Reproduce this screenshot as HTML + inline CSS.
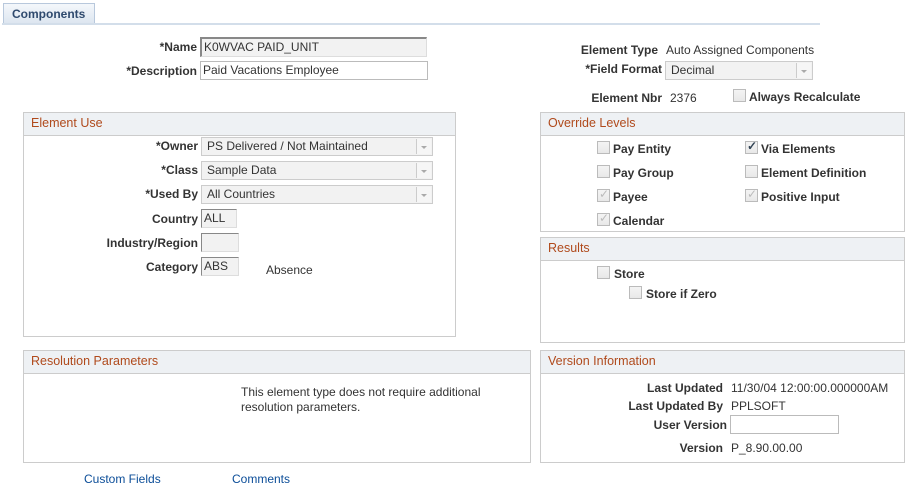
<!DOCTYPE html>
<html><head><meta charset="utf-8"><style>
body{margin:0;width:910px;height:487px;background:#fff;font-family:"Liberation Sans",Arial,sans-serif;font-size:12px;color:#333;position:relative;overflow:hidden}
.a{position:absolute;line-height:14px;white-space:nowrap}
.b{font-weight:bold}
.r{text-align:right}
.box{position:absolute;border:1px solid #ccc;box-sizing:border-box;background:#fff}
.hd{height:22px;background:#eef1f4;border-bottom:1px solid #ccc;color:#b04a1c;font-size:12.5px;line-height:21px;padding-left:7px}
.inp{position:absolute;box-sizing:border-box;border:1px solid #bbb;background:#fff;line-height:16px;padding-left:2px;font-size:12px;color:#333}
.gr{background:#f2f2f2;border-color:#ddd}
.sel{position:absolute;box-sizing:border-box;border:1px solid #ccc;background:#f2f2f2;line-height:17px;padding-left:5px;color:#333}
.sel i{position:absolute;right:1px;top:1px;width:14px;height:15px;border-left:1px solid #ccc;background:#f6f6f6}
.sel i:after{content:"";position:absolute;left:4px;top:7px;border:3px solid transparent;border-top:3px solid #aaa}
.cb{position:absolute;width:11px;height:11px;border:1px solid #bbb;background:linear-gradient(#f4f4f4,#e8e8e8)}
.cb.k:after{content:"✓";position:absolute;left:1px;top:-3px;font-size:12px;color:#bbb}
.cb.d:after{content:"✓";position:absolute;left:1px;top:-3px;font-size:12px;color:#345;font-weight:bold}
.lk{color:#0b4d98}
</style></head><body>
<div style="position:absolute;left:3px;top:3px;width:92px;height:20px;border:1px solid #b8c8dc;border-bottom:none;background:linear-gradient(#f4f7fb,#dde6f0);box-sizing:border-box"></div>
<div class="a b" style="left:12px;top:7px;color:#2f4a6e">Components</div>
<div style="position:absolute;left:2px;top:23px;width:818px;height:2px;background:#d3deea"></div>

<div class="a b r" style="left:100px;width:97px;top:40px">*Name</div>
<div class="inp gr" style="left:200px;top:37px;width:227px;height:20px;border-top:2px solid #888;border-left:2px solid #888">K0WVAC PAID_UNIT</div>
<div class="a b r" style="left:100px;width:97px;top:64px">*Description</div>
<div class="inp" style="left:200px;top:61px;width:228px;height:19px">Paid Vacations Employee</div>

<div class="a b r" style="left:560px;width:98px;top:43px">Element Type</div>
<div class="a" style="left:666px;top:43px">Auto Assigned Components</div>
<div class="a b r" style="left:560px;width:102px;top:62px">*Field Format</div>
<div class="sel" style="left:665px;top:61px;width:148px;height:19px">Decimal<i></i></div>
<div class="a b r" style="left:560px;width:102px;top:91px">Element Nbr</div>
<div class="a" style="left:670px;top:91px">2376</div>
<div class="cb" style="left:733px;top:89px"></div>
<div class="a b" style="left:749px;top:90px">Always Recalculate</div>

<div class="box" style="left:23px;top:112px;width:433px;height:225px"><div class="hd">Element Use</div></div>
<div class="a b r" style="left:100px;width:98px;top:139px">*Owner</div>
<div class="sel" style="left:201px;top:137px;width:232px;height:19px">PS Delivered / Not Maintained<i></i></div>
<div class="a b r" style="left:100px;width:98px;top:163px">*Class</div>
<div class="sel" style="left:201px;top:161px;width:232px;height:19px">Sample Data<i></i></div>
<div class="a b r" style="left:100px;width:98px;top:187px">*Used By</div>
<div class="sel" style="left:201px;top:185px;width:232px;height:19px">All Countries<i></i></div>
<div class="a b r" style="left:100px;width:98px;top:212px">Country</div>
<div class="inp gr" style="left:201px;top:209px;width:36px;height:19px;border-top:1px solid #888;border-left:1px solid #888">ALL</div>
<div class="a b r" style="left:100px;width:98px;top:236px">Industry/Region</div>
<div class="inp gr" style="left:201px;top:233px;width:38px;height:19px;border-top:1px solid #888;border-left:1px solid #888"></div>
<div class="a b r" style="left:100px;width:98px;top:260px">Category</div>
<div class="inp gr" style="left:201px;top:257px;width:38px;height:19px;border-top:1px solid #888;border-left:1px solid #888">ABS</div>
<div class="a" style="left:266px;top:263px">Absence</div>

<div class="box" style="left:540px;top:112px;width:365px;height:120px"><div class="hd">Override Levels</div></div>
<div class="cb" style="left:597px;top:141px"></div><div class="a b" style="left:613px;top:142px">Pay Entity</div>
<div class="cb d" style="left:745px;top:141px"></div><div class="a b" style="left:761px;top:142px">Via Elements</div>
<div class="cb" style="left:597px;top:165px"></div><div class="a b" style="left:613px;top:166px">Pay Group</div>
<div class="cb" style="left:745px;top:165px"></div><div class="a b" style="left:761px;top:166px">Element Definition</div>
<div class="cb k" style="left:597px;top:189px"></div><div class="a b" style="left:613px;top:190px">Payee</div>
<div class="cb k" style="left:745px;top:189px"></div><div class="a b" style="left:761px;top:190px">Positive Input</div>
<div class="cb k" style="left:597px;top:213px"></div><div class="a b" style="left:613px;top:214px">Calendar</div>

<div class="box" style="left:540px;top:237px;width:365px;height:106px"><div class="hd">Results</div></div>
<div class="cb" style="left:597px;top:266px"></div><div class="a b" style="left:614px;top:267px">Store</div>
<div class="cb" style="left:629px;top:286px"></div><div class="a b" style="left:646px;top:287px">Store if Zero</div>

<div class="box" style="left:23px;top:350px;width:508px;height:113px"><div class="hd">Resolution Parameters</div></div>
<div class="a" style="left:241px;top:385px;line-height:15px">This element type does not require additional<br>resolution parameters.</div>

<div class="box" style="left:540px;top:350px;width:365px;height:113px"><div class="hd">Version Information</div></div>
<div class="a b r" style="left:600px;width:123px;top:381px">Last Updated</div>
<div class="a" style="left:731px;top:381px">11/30/04 12:00:00.000000AM</div>
<div class="a b r" style="left:600px;width:123px;top:399px">Last Updated By</div>
<div class="a" style="left:731px;top:399px">PPLSOFT</div>
<div class="a b r" style="left:600px;width:127px;top:418px">User Version</div>
<div class="inp" style="left:730px;top:415px;width:109px;height:19px"></div>
<div class="a b r" style="left:600px;width:123px;top:441px">Version</div>
<div class="a" style="left:731px;top:441px">P_8.90.00.00</div>

<div class="a lk" style="left:84px;top:472px">Custom Fields</div>
<div class="a lk" style="left:232px;top:472px">Comments</div>
</body></html>
